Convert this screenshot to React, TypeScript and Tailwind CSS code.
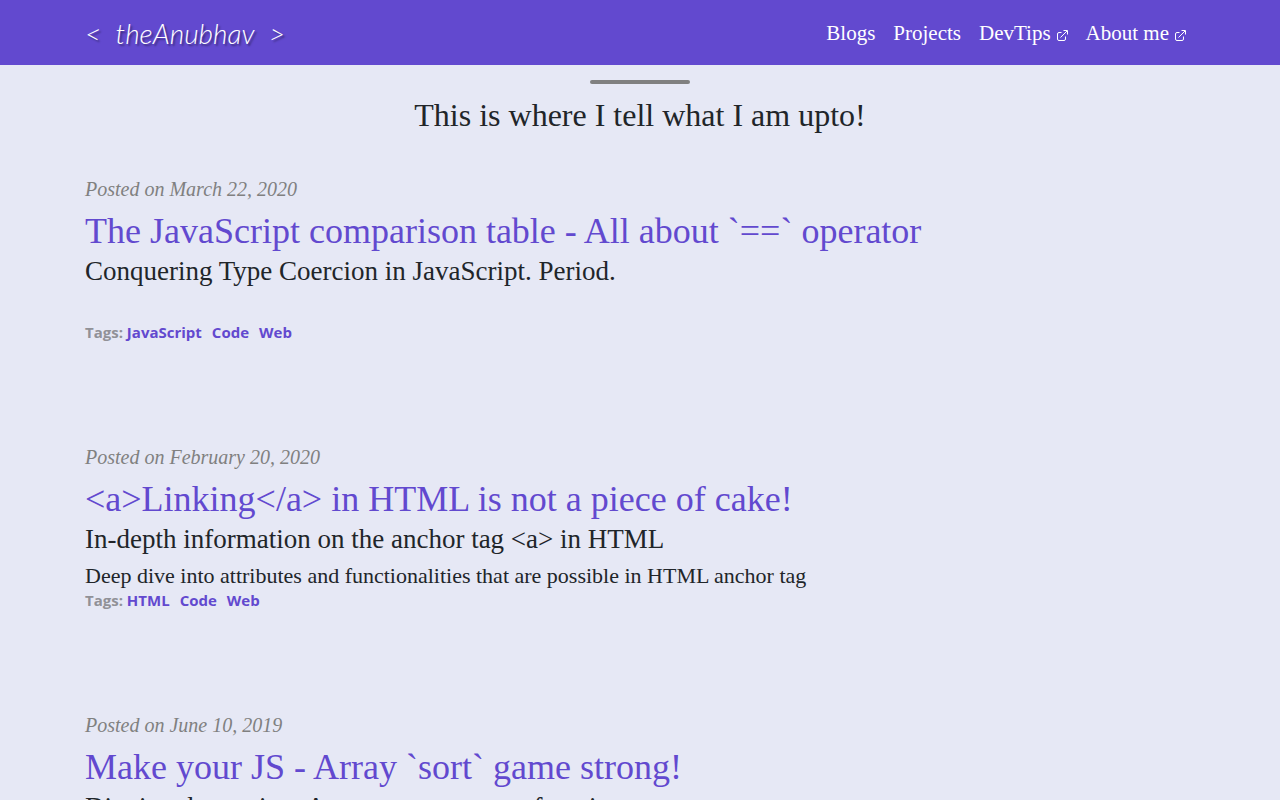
import React from 'react';

interface Post {
  date: string;
  title: string;
  subtitle: string;
  summary?: string;
  tags: string[];
}

const posts: Post[] = [
  {
    date: 'March 22, 2020',
    title: 'The JavaScript comparison table - All about `==` operator',
    subtitle: 'Conquering Type Coercion in JavaScript. Period.',
    tags: ['JavaScript', 'Code', 'Web'],
  },
  {
    date: 'February 20, 2020',
    title: '<a>Linking</a> in HTML is not a piece of cake!',
    subtitle: 'In-depth information on the anchor tag <a> in HTML',
    summary: 'Deep dive into attributes and functionalities that are possible in HTML anchor tag',
    tags: ['HTML', 'Code', 'Web'],
  },
  {
    date: 'June 10, 2019',
    title: 'Make your JS - Array `sort` game strong!',
    subtitle: 'Digging deeper into Array prototype sort function',
    tags: ['JavaScript', 'Code', 'Web'],
  },
];

const links = [
  { label: 'Blogs', external: false },
  { label: 'Projects', external: false },
  { label: 'DevTips', external: true },
  { label: 'About me', external: true },
];

const ExternalIcon: React.FC = () => (
  <svg viewBox="0 0 11 11" className="mt-1 size-[11px]" fill="none" stroke="currentColor" aria-hidden="true">
    <path d="M4.5 2.5H2Q.5 2.5.5 4V9Q.5 10.5 2 10.5H7Q8.5 10.5 8.5 9V6.5M3.5 7.5L10 1M6.5.5H10.5V4.5" />
  </svg>
);

const Header: React.FC = () => (
  <header className="bg-[#6249cf] text-white">
    <div className="mx-auto flex h-[65px] max-w-[1110px] items-center justify-between">
      <a
        href="#"
        className="flex w-[200px] items-center justify-between font-[Lato,sans-serif] text-[28px] font-light italic [text-shadow:2px_2px_2px_rgba(0,0,0,0.4)]"
      >
        <span>&lt;</span>
        <span>theAnubhav</span>
        <span>&gt;</span>
      </a>
      <nav className="flex gap-[18px] pt-[2px] pr-[9px] text-[21px]">
        {links.map((link) => (
          <a key={link.label} href="#" className="flex items-center gap-[6px]">
            {link.label}
            {link.external && <ExternalIcon />}
          </a>
        ))}
      </nav>
    </div>
  </header>
);

const PostItem: React.FC<{ post: Post }> = ({ post }) => (
  <article className="mb-[99px]">
    <p className="text-[20px] leading-[30px] text-[#808080] italic">Posted on {post.date}</p>
    <h2 className="mt-[6px] text-[36px] leading-[42px] text-[#6249cf]">
      <a href="#">{post.title}</a>
    </h2>
    <h3 className="text-[27px] leading-[38px]">{post.subtitle}</h3>
    <p className="mt-[5px] min-h-[26px] text-[22px] leading-[26px]">{post.summary}</p>
    <div className="flex gap-[10px] font-['Open_Sans',sans-serif] text-[15px] leading-[22px] font-bold text-[#6249cf]">
      {post.tags.map((tag, i) => (
        <span key={tag}>
          {i === 0 && <span className="text-[#919197]">Tags: </span>}
          <a href="#">{tag}</a>
        </span>
      ))}
    </div>
  </article>
);

export default function App() {
  return (
    <div className="min-h-screen bg-[#e6e8f5] font-['Liberation_Serif',serif] text-[#212529]">
      <Header />
      <main className="mx-auto max-w-[1110px] pt-[15px]">
        <hr className="mx-auto h-1 w-[100px] rounded-sm border-0 bg-[#808080]" />
        <h1 className="mt-[10px] mb-[38px] text-center text-[32px] leading-[42px]">This is where I tell what I am upto!</h1>
        {posts.map((post) => (
          <PostItem key={post.title} post={post} />
        ))}
      </main>
    </div>
  );
}
